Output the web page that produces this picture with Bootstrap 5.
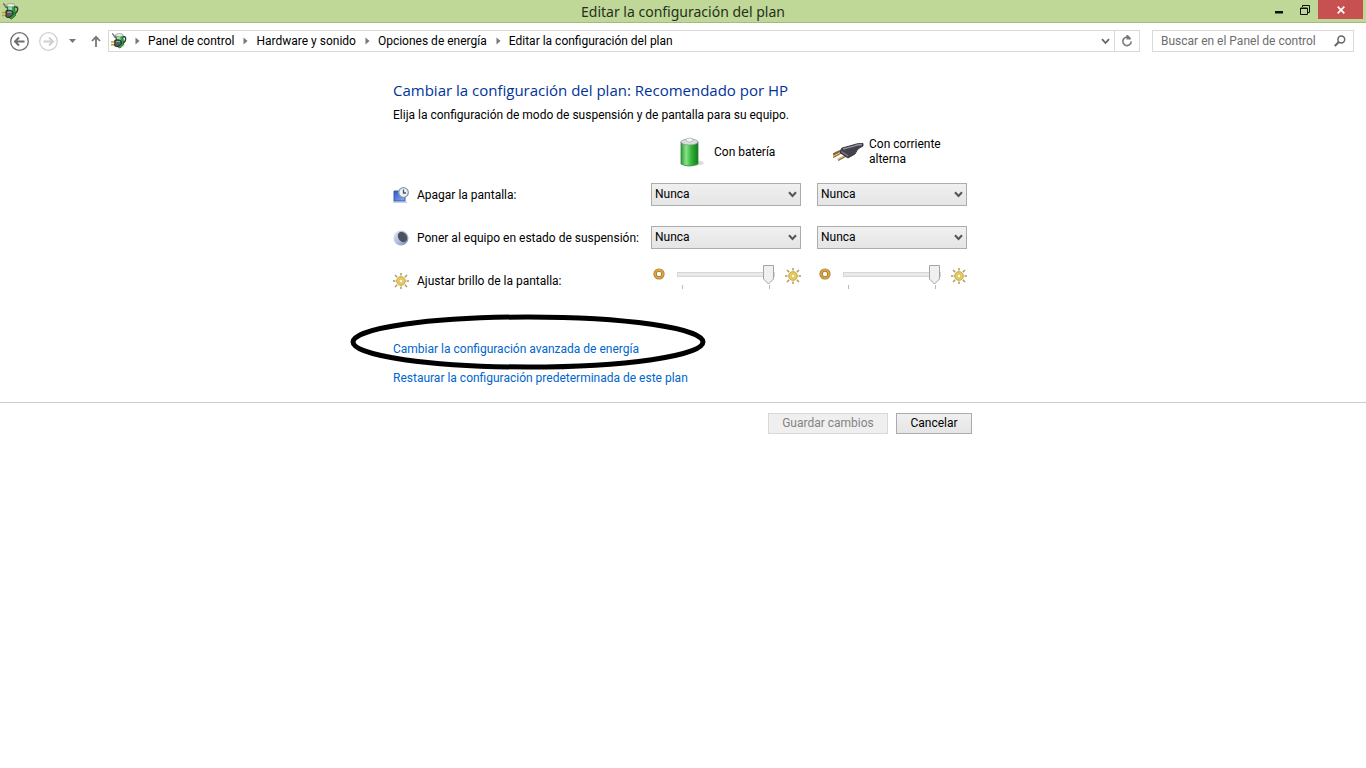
<!DOCTYPE html>
<html lang="es">
<head>
<meta charset="utf-8">
<meta name="viewport" content="width=device-width, initial-scale=1">
<title>Editar la configuración del plan</title>
<link href="https://cdn.jsdelivr.net/npm/bootstrap@5.3.0/dist/css/bootstrap.min.css" rel="stylesheet">
<style>
  body { font-family: Roboto, "Open Sans", sans-serif; font-size: 12px; line-height: 16px; color: #000; background: #fff; }
  svg { display: block; flex: none; }
  button, input, select { font-family: inherit; }
  h1, h2 { font-family: "Noto Sans", "Open Sans", sans-serif; font-weight: 400; }
  .titlebar { height: 23px; background: #bfd897; border-bottom: 1px solid #a3bb7e; }
  .titlebar h1 { font-size: 14px; line-height: 24px; color: #26301c; }
  .app-icon { left: 2px; top: 3px; }
  .win-controls { right: 3px; top: 0; }
  .win-controls button, .tool { border: 0; padding: 0; background: none; display: flex; align-items: center; justify-content: center; }
  .win-controls button { width: 26px; height: 19px; }
  .win-controls .close-win { width: 45px; background: #c75050; }
  .navrow { padding: 7px 12px 0 10px; gap: 12px; }
  .history { gap: 10px; margin-right: 7px; }
  .box { border: 1px solid #d9d9d9; height: 22px; }
  .address { padding-left: 2px; }
  .crumbs { gap: 9px; }
  .crumbs li { gap: 8px; }
  .crumbs a { color: #000; text-decoration: none; }
  .refresh { width: 25px; height: 20px; border-left: 1px solid #d9d9d9; }
  .search { width: 202px; padding: 0 7px 0 8px; }
  .search input { border: 0; outline: 0; padding: 0; min-width: 0; color: #6d6d6d; }
  .search input::placeholder { color: #6d6d6d; opacity: 1; }
  .panel { max-width: 580px; }
  .panel h2 { font-family: "Open Sans", "Noto Sans", sans-serif; font-size: 15px; line-height: 20px; color: #003399; }
  .intro { margin: 7px 0 8px; }
  .settings { display: grid; grid-template-columns: 242px 150px 150px; column-gap: 16px; }
  .heads { height: 42px; }
  .ac-label { width: 84px; line-height: 15px; }
  .set-row { height: 43px; }
  .combo { height: 23px; border: 1px solid #acacac; border-radius: 0; padding: 0 20px 0 3px; font-size: 12px; line-height: 21px; color: #000;
    background: url("data:image/svg+xml,%3Csvg xmlns='http://www.w3.org/2000/svg' width='9' height='7'%3E%3Cpath d='M1 1.2L4.500 5L8 1.200' fill='none' stroke='%23555' stroke-width='2'/%3E%3C/svg%3E") no-repeat right 3px center, linear-gradient(#f0f0f0, #e5e5e5); background-size: auto; }
  .slider-cell { padding: 0 0 8px 2px; gap: 12px; }
  .slider-cell svg:last-child { margin-left: -2px; }
  .bright { appearance: none; width: 98px; height: 20px; background: none; margin: 0; display: block; }
  .bright::-webkit-slider-runnable-track { height: 5px; background: #e7eaea; border: 1px solid #d6d6d6; }
  .bright::-webkit-slider-thumb { appearance: none; width: 11px; height: 20px; margin-top: -8px; border: 0;
    background: url("data:image/svg+xml,%3Csvg xmlns='http://www.w3.org/2000/svg' width='11' height='20'%3E%3Cpath d='M.5 .5H10.500V14L5.500 19L.5 14Z' fill='%23f0f0f0' stroke='%23a4a4a4'/%3E%3C/svg%3E") no-repeat; }
  .ticks { padding: 0 5px; height: 5px; }
  .ticks i { width: 1px; height: 4px; background: #bbb; }
  .links { padding-top: 39px; gap: 13px; }
  .links a { color: #0066cc; text-decoration: none; }
  .ring { left: -43px; top: -27px; pointer-events: none; }
  .actions { border-top: 1px solid #ccc; margin-top: 16px; padding-top: 10px; }
  .buttons { padding-right: 1px; }
  .push { min-width: 76px; height: 21px; padding: 0 12px; border: 1px solid #acacac; border-radius: 0; font-size: 12px; line-height: 19px; color: #000; background: linear-gradient(#f0f0f0, #e5e5e5); }
  .push.wide { min-width: 120px; }
  .push:disabled { color: #838383; background: #efefef; border-color: #d9d9d9; }
</style>
</head>
<body>
<svg width="0" height="0" class="position-absolute" aria-hidden="true">
  <defs>
    <linearGradient id="gGreen"><stop offset="0" stop-color="#2c9c35"/><stop offset=".3" stop-color="#8be28a"/><stop offset=".6" stop-color="#35b53c"/><stop offset="1" stop-color="#117a1e"/></linearGradient>
    <radialGradient id="gSun"><stop offset="0" stop-color="#fffbe0"/><stop offset=".5" stop-color="#f3e27a"/><stop offset="1" stop-color="#d3b13c"/></radialGradient>
    <linearGradient id="gMoon" x2="1" y2="1"><stop offset="0" stop-color="#e6eaf2"/><stop offset=".5" stop-color="#b4c1dd"/><stop offset="1" stop-color="#7389bf"/></linearGradient>
    <linearGradient id="gScreen" x2="1" y2="1"><stop offset="0" stop-color="#2f55c4"/><stop offset="1" stop-color="#86b0f5"/></linearGradient>
    <symbol id="power" viewBox="0 0 17 17">
      <path d="M1 .8Q3 1 3.500 4L6 5" fill="none" stroke="#666" stroke-width="1.300"/>
      <path d="M12 4H14.500Q16 4.500 15.500 7Q15 10 12.500 10.500" fill="none" stroke="#26472b" stroke-width="1.500"/>
      <path d="M5 2.500H12.500L13.500 12.500L9.500 16L6 14Z" fill="#27a53d" stroke="#24502a" stroke-width=".8"/>
      <path d="M6 3.500H10V8H6.500Z" fill="#8fe89b"/>
      <ellipse cx="8.800" cy="2.300" rx="4" ry="1.700" fill="#e9efe9" stroke="#777" stroke-width=".6"/>
      <path d="M0 9.500H5M0 12.500H5" stroke="#c29a35" stroke-width="1.600"/>
      <path d="M4 7.800L6.500 7.200Q10 7 11 9V11.500Q9 14.500 6 14.500L4 13.800Z" fill="#555d5d" stroke="#181c1a" stroke-width=".9"/>
      <path d="M5.500 9.500Q8 8.300 9.500 9.500" fill="none" stroke="#b5bdbd"/>
    </symbol>
    <symbol id="sun" viewBox="0 0 16 16">
      <path d="M8 0V2.500M8 13.500V16M0 8H2.500M13.500 8H16M2 2L4.200 4.200M11.800 11.800L14 14M2 14L4.200 11.800M11.800 4.200L14 2" stroke="#a99a68" stroke-width="1.500"/>
      <circle cx="8" cy="8" r="4.400" fill="url(#gSun)" stroke="#d3b548"/>
      <circle cx="8" cy="8" r="2" fill="#fffbe2" stroke="#c9a63f" stroke-width=".8"/>
    </symbol>
    <symbol id="dim" viewBox="0 0 12 12"><circle cx="6" cy="6" r="3.900" fill="#fff" stroke="#a9771f" stroke-width="3.400"/><circle cx="6" cy="6" r="3.900" fill="none" stroke="#d8a447" stroke-width="2"/></symbol>
    <symbol id="arrow" viewBox="0 0 5 8"><path d="M.5 .5L4.500 4L.5 7.500Z" fill="#777"/></symbol>
  </defs>
</svg>

<header class="titlebar position-relative text-center">
  <svg class="app-icon position-absolute" width="17" height="17"><use href="#power"/></svg>
  <h1 class="m-0">Editar la configuración del plan</h1>
  <div class="win-controls position-absolute d-flex">
    <button type="button" aria-label="Minimizar"><svg width="8" height="10"><path d="M0 6H8V8.500H0Z" fill="#111"/></svg></button>
    <button type="button" aria-label="Restaurar"><svg width="10" height="10" fill="none" stroke="#111"><path d="M2.500 2V.5H9.500V7.500H8M.5 3H7.500V9.500H.5ZM0 3.500H8"/></svg></button>
    <button type="button" class="close-win" aria-label="Cerrar"><svg width="8" height="8"><path d="M.7 .7L7.300 7.300M7.300 .7L.7 7.300" stroke="#fff" stroke-width="1.700"/></svg></button>
  </div>
</header>

<nav class="navrow d-flex align-items-center" aria-label="Navegación">
  <div class="d-flex align-items-center flex-grow-1">
    <div class="history d-flex align-items-center">
      <button type="button" class="tool" aria-label="Atrás"><svg width="19" height="19" fill="none" stroke="#6e6e6e"><circle cx="9.500" cy="9.500" r="8.800" stroke-width="1.300"/><path d="M14.500 9.500H5.500M9 5.500L5 9.500L9 13.500" stroke-width="2"/></svg></button>
      <button type="button" class="tool" aria-label="Adelante"><svg width="19" height="19" fill="none" stroke="#cfcfcf"><circle cx="9.500" cy="9.500" r="8.800" stroke-width="1.200"/><path d="M4.500 9.500H13.500M10 5.500L14 9.500L10 13.500" stroke-width="1.800"/></svg></button>
      <button type="button" class="tool" aria-label="Recientes"><svg width="9" height="4"><path d="M1 0H8L4.500 4Z" fill="#777"/></svg></button>
      <button type="button" class="tool ps-1" aria-label="Subir"><svg width="10" height="12" fill="none" stroke="#777" stroke-width="1.800"><path d="M5 12V1.500M1 6L5 1.800L9 6"/></svg></button>
    </div>
    <div class="box address d-flex align-items-center flex-grow-1">
      <svg width="16" height="16" class="me-2"><use href="#power"/></svg>
      <ol class="crumbs breadcrumb m-0 flex-grow-1">
        <li class="d-flex align-items-center"><svg width="5" height="8"><use href="#arrow"/></svg><a href="#">Panel de control</a></li>
        <li class="d-flex align-items-center"><svg width="5" height="8"><use href="#arrow"/></svg><a href="#">Hardware y sonido</a></li>
        <li class="d-flex align-items-center"><svg width="5" height="8"><use href="#arrow"/></svg><a href="#">Opciones de energía</a></li>
        <li class="d-flex align-items-center"><svg width="5" height="8"><use href="#arrow"/></svg><a href="#">Editar la configuración del plan</a></li>
      </ol>
      <button type="button" class="tool px-1" aria-label="Ubicaciones anteriores"><svg width="9" height="7"><path d="M1 1.200L4.500 5L8 1.200" fill="none" stroke="#666" stroke-width="1.800"/></svg></button>
      <button type="button" class="tool refresh" aria-label="Actualizar"><svg width="12" height="12"><path d="M8.500 3A4.200 4.200 0 1 0 10.200 6.500" fill="none" stroke="#777" stroke-width="1.600"/><path d="M5.500 0H6.800L9.800 3V4.500H5.500Z" fill="#777"/></svg></button>
    </div>
  </div>
  <form class="box search d-flex align-items-center">
    <input type="search" class="flex-grow-1" placeholder="Buscar en el Panel de control" aria-label="Buscar en el Panel de control">
    <svg width="12" height="12" fill="none" stroke="#666"><circle cx="7.300" cy="4.500" r="3.400" stroke-width="1.500"/><path d="M4.800 7L.8 11" stroke-width="2"/></svg>
  </form>
</nav>

<main>
  <div class="panel mx-auto pt-4">
    <h2 class="mb-0 mt-1">Cambiar la configuración del plan: Recomendado por HP</h2>
    <p class="intro">Elija la configuración de modo de suspensión y de pantalla para su equipo.</p>

    <div class="settings heads align-items-center">
      <span></span>
      <div class="d-flex align-items-center gap-2 ps-4">
        <svg width="31" height="32" viewBox="0 0 31 32"><ellipse cx="18" cy="27" rx="11" ry="3" fill="#dcdcdc"/><path d="M6 6V28Q14 32 23 28V6Z" fill="url(#gGreen)" stroke="#2b8a37" stroke-width=".8"/><ellipse cx="14.500" cy="6" rx="8.500" ry="3" fill="#d9dedd" stroke="#8c9792" stroke-width=".8"/><ellipse cx="14.500" cy="4" rx="3.500" ry="2" fill="#f4f6f6" stroke="#a5aeab" stroke-width=".7"/></svg>
        <span>Con batería</span>
      </div>
      <div class="d-flex align-items-center gap-1 ps-3">
        <svg width="32" height="32" viewBox="1 0 32 32"><path d="M1 21L10 16M6 24L15 19M1 18.500L8 15" stroke="#8c6430" stroke-width="2.200"/><path d="M1 20.500L10 15.500M6 23.500L15 18.500" stroke="#ecd29c"/><path d="M31 7.500Q25 7 21 9L10 12Q7.500 15 8.500 17L16 22L23 18Q25 12 31 10Z" fill="#42424c" stroke="#24242a" stroke-width=".8"/><path d="M11 13L21 10.500Q25 8.500 30 8.500" fill="none" stroke="#9292a2" stroke-width="1.300"/><path d="M9.500 15.500L16 20" stroke="#80808f" stroke-width="1.200"/></svg>
        <span class="ac-label">Con corriente alterna</span>
      </div>
    </div>

    <div class="settings set-row align-items-center">
      <div class="d-flex align-items-center gap-2">
        <svg width="16" height="16"><path d="M1 4H12V14H1Z" fill="url(#gScreen)" stroke="#4059ab"/><path d="M0 15H14" stroke="#9aa7cc"/><circle cx="10.500" cy="5.500" r="4.800" fill="#f0f3f5" stroke="#8996a5" stroke-width="1.300"/><path d="M10.500 2.500V6H13" fill="none" stroke="#44566b" stroke-width="1.300"/></svg>
        <span class="text-nowrap">Apagar la pantalla:</span>
      </div>
      <select class="form-select combo" aria-label="Apagar la pantalla con batería"><option>Nunca</option></select>
      <select class="form-select combo" aria-label="Apagar la pantalla con corriente alterna"><option>Nunca</option></select>
    </div>
    <div class="settings set-row align-items-center">
      <div class="d-flex align-items-center gap-2">
        <svg width="16" height="16"><circle cx="8" cy="8" r="7.500" fill="url(#gMoon)"/><ellipse cx="9.500" cy="7" rx="4.300" ry="5.500" transform="rotate(-35 9.500 7)" fill="#4b5361"/></svg>
        <span class="text-nowrap">Poner al equipo en estado de suspensión:</span>
      </div>
      <select class="form-select combo" aria-label="Suspensión con batería"><option>Nunca</option></select>
      <select class="form-select combo" aria-label="Suspensión con corriente alterna"><option>Nunca</option></select>
    </div>
    <div class="settings set-row align-items-center">
      <div class="d-flex align-items-center gap-2">
        <svg width="16" height="16"><use href="#sun"/></svg>
        <span class="text-nowrap">Ajustar brillo de la pantalla:</span>
      </div>
      <div class="slider-cell d-flex align-items-start">
        <svg width="12" height="12" class="mt-1"><use href="#dim"/></svg>
        <div><input type="range" class="bright" value="100" aria-label="Brillo con batería"><div class="ticks d-flex justify-content-between align-items-end"><i></i><i></i></div></div>
        <svg width="16" height="16" class="mt-1"><use href="#sun"/></svg>
      </div>
      <div class="slider-cell d-flex align-items-start">
        <svg width="12" height="12" class="mt-1"><use href="#dim"/></svg>
        <div><input type="range" class="bright" value="100" aria-label="Brillo con corriente alterna"><div class="ticks d-flex justify-content-between align-items-end"><i></i><i></i></div></div>
        <svg width="16" height="16" class="mt-1"><use href="#sun"/></svg>
      </div>
    </div>

    <div class="links d-flex flex-column align-items-start">
      <div class="position-relative">
        <a href="#">Cambiar la configuración avanzada de energía</a>
        <svg class="ring position-absolute" width="356" height="56" aria-hidden="true"><ellipse cx="178" cy="28" rx="175" ry="25" fill="none" stroke="#000" stroke-width="5"/></svg>
      </div>
      <a href="#">Restaurar la configuración predeterminada de este plan</a>
    </div>
  </div>
  <div class="actions">
    <div class="panel buttons mx-auto d-flex justify-content-end gap-2">
      <button type="button" class="push wide" disabled>Guardar cambios</button>
      <button type="button" class="push">Cancelar</button>
    </div>
  </div>
</main>
<script src="https://cdn.jsdelivr.net/npm/bootstrap@5.3.0/dist/js/bootstrap.bundle.min.js"></script>
</body>
</html>
